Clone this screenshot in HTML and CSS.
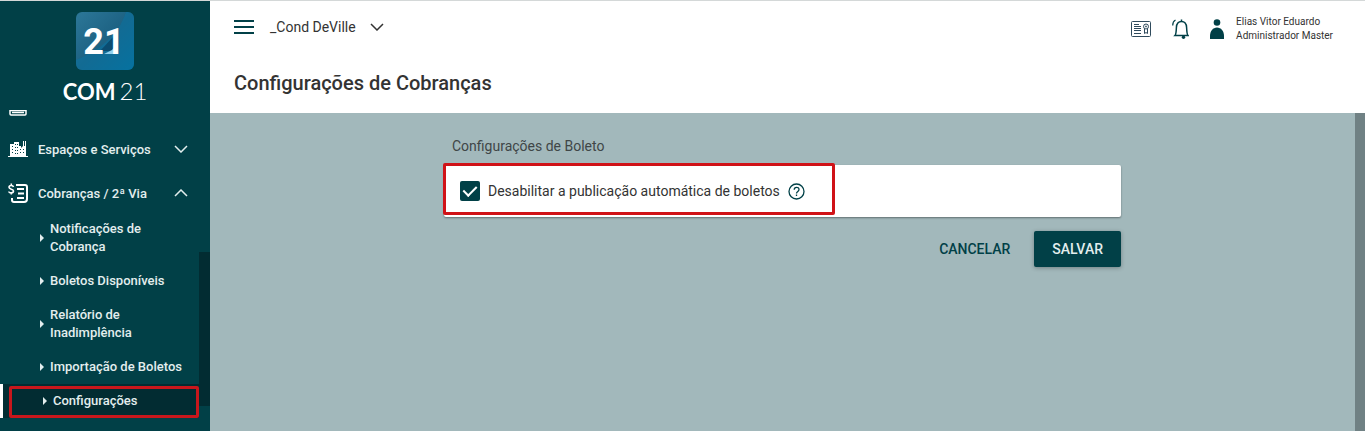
FILE: index.html
```html
<!DOCTYPE html>
<html lang="pt-BR">
<head>
  <meta charset="UTF-8">
  <meta name="viewport" content="width=device-width, initial-scale=1.0">
  <title>COM21 - Configurações de Cobranças</title>
  <link rel="stylesheet" href="styles.css">
</head>
<body>
  <aside class="sidebar">
    <div class="logo">
      <svg class="logo-mark" viewBox="0 0 58 58" role="img" aria-label="COM21">
        <defs>
          <linearGradient id="logo-bg" x1="0" y1="0" x2="1" y2="1">
            <stop offset="0" stop-color="#2c7798"/>
            <stop offset="0.5" stop-color="#1d6283"/>
            <stop offset="1" stop-color="#04709c"/>
          </linearGradient>
        </defs>
        <rect width="58" height="58" rx="6" fill="url(#logo-bg)"/>
        <path d="M50 0h2a6 6 0 0 1 6 6v46a6 6 0 0 1-6 6H6a6 6 0 0 1-6-6v-4C22 39 42 25 50 0z" fill="#0874a3" opacity="0.5"/>
        <path d="M24 39l14-15v15z" fill="#0b4c70"/>
        <path d="M28 42l8-4 5-6v10z" fill="#8fd0ee"/>
        <text class="logo-digits" x="28" y="42">21</text>
      </svg>
      <div class="logo-name"><b>COM</b><span>21</span></div>
    </div>

    <nav class="menu">
      <div class="menu-clipped">
        <svg width="18" height="22" viewBox="0 0 18 22" fill="none" stroke="#fff">
          <path d="M1 1h16v19q0 1-1 1H2q-1 0-1-1z" stroke-width="1.5"/>
          <path d="M3 18.500h12M1 16.500h16" stroke-width="1.5"/>
        </svg>
      </div>
      <button class="menu-item" type="button">
        <svg class="menu-icon" viewBox="0 0 20 20" fill="#fff">
          <path fill-rule="evenodd" d="M0 17h2V5h4V3h5v4h2V9l2-2V2h1v5h1V2h1v15h2v1H0zM4 7v1h1V7zm0 3v1h1v-1zm0 3v1h1v-1zM7 5v1h1V5zm2 0v1h1V5zM7 8v1h1V8zm2 0v1h1V8zm-2 3v1h1v-1zm2 0v1h1v-1zm-2 3v1h1v-1zm2 0v1h1v-1zm3-4v1h1v-1zm3 0v1h1v-1zm-3 3v1h1v-1zm3 0v1h1v-1z"/>
        </svg>
        <span class="menu-label">Espaços e Serviços</span>
        <svg class="chevron" viewBox="0 0 14 8"><path d="M1 1l6 6 6-6"/></svg>
      </button>
      <button class="menu-item" type="button" aria-expanded="true">
        <svg class="menu-icon" viewBox="0 0 20 20" fill="none" stroke="#fff" stroke-width="2">
          <path d="M8 2h9q2 0 2 2v12q0 3-3 3H6q-2 0-2-2v-2"/>
          <path d="M9 6h7M10 10.500h6M9 15h7"/>
          <path d="M5.500 4C5 2 1 2 1 4.300s4.500 1.400 4.500 3.700S1 10.500.800 8.500M3.300.500v2M3.300 9.500v2" stroke-width="1.600"/>
        </svg>
        <span class="menu-label">Cobranças / 2ª Via</span>
        <svg class="chevron" viewBox="0 0 14 8"><path d="M1 7l6-6 6 6"/></svg>
      </button>
      <ul class="submenu">
        <li><a href="#">Notificações de Cobrança</a></li>
        <li><a href="#">Boletos Disponíveis</a></li>
        <li><a href="#">Relatório de Inadimplência</a></li>
        <li><a href="#">Importação de Boletos</a></li>
        <li><a class="active" href="#">Configurações</a></li>
      </ul>
    </nav>
    <div class="sidebar-scroll"></div>
  </aside>

  <div class="page">
    <header class="header">
      <div class="topbar">
        <button class="icon-btn" type="button" aria-label="Menu">
          <svg width="20" height="14" viewBox="0 0 20 14" fill="#014047">
            <path d="M0 0h20v2H0zM0 6h20v2H0zM0 12h20v2H0z"/>
          </svg>
        </button>
        <button class="cond" type="button">
          _Cond DeVille
          <svg class="chevron" viewBox="0 0 14 8"><path d="M1 1l6 6 6-6"/></svg>
        </button>
        <div class="user-area">
          <button class="icon-btn" type="button" aria-label="Certificado">
            <svg width="20" height="16" viewBox="0 0 20 16" fill="none" stroke="#2f4a5c">
              <rect x="0.500" y="0.500" width="19" height="15" rx="1"/>
              <path d="M3 3.500h5M3 5.500h7M3 7.500h7M3 9.500h7M3 12.500h7"/>
              <circle cx="15" cy="5.500" r="2.500"/>
              <circle cx="15" cy="5.500" r="0.600"/>
              <path d="M13.500 8v4.500l1.500-1 1.500 1V8"/>
            </svg>
          </button>
          <button class="icon-btn" type="button" aria-label="Notificações">
            <svg width="17" height="20" viewBox="0 0 17 20" fill="none" stroke="#014047" stroke-width="1.500">
              <path d="M3 16.500h13c-1-1-1.200-3-1.400-8C14.400 4.500 12.500 2.500 9.500 2.500S4.600 4.500 4.400 8.500c-.2 5-.4 7-1.400 8zM9.500 2.500V.500"/>
              <path d="M.700 6.500C.700 4 1.500 2 3.500 1" stroke-width="1.200"/>
              <circle cx="11.500" cy="18.200" r="1.700" fill="#014047" stroke="none"/>
            </svg>
          </button>
          <button class="profile" type="button">
            <svg width="14" height="20" viewBox="0 0 14 20" fill="#014047">
              <circle cx="7" cy="3.500" r="3.300"/>
              <path d="M0 20v-3C0 12 3 8.500 7 8.500s7 3.500 7 8.500v3z"/>
            </svg>
            <span>Elias Vitor Eduardo<br>Administrador Master</span>
          </button>
        </div>
      </div>
      <h1>Configurações de Cobranças</h1>
    </header>

    <main class="content">
      <form class="settings">
        <h2>Configurações de Boleto</h2>
        <div class="card">
          <div class="option">
            <input type="checkbox" id="disable-auto" checked>
            <label for="disable-auto">Desabilitar a publicação automática de boletos</label>
            <button class="icon-btn" type="button" aria-label="Ajuda">
              <svg width="17" height="17" viewBox="0 0 17 17" fill="none" stroke="#014047" stroke-width="1.300">
                <circle cx="8.500" cy="8.500" r="7.500"/>
                <path d="M6.200 6.800C6.200 3.500 11 3.600 11 6.500c0 1.800-2.500 2-2.500 4M8.500 11.500V13"/>
              </svg>
            </button>
          </div>
        </div>
        <div class="actions">
          <button class="btn" type="button">CANCELAR</button>
          <button class="btn btn-primary" type="submit">SALVAR</button>
        </div>
      </form>
    </main>
  </div>
</body>
</html>
```
FILE: styles.css
```css
*,
*::before,
*::after {
  margin: 0;
  padding: 0;
  box-sizing: border-box;
}

body {
  display: flex;
  height: 100vh;
  overflow: hidden;
  border-top: 1px solid #d4d8d8;
  background-color: #a2b8bb;
  color: #333;
  font-family: Roboto, sans-serif;
}

button {
  border: none;
  background: none;
  color: inherit;
  font: inherit;
  cursor: pointer;
}

svg {
  display: block;
  flex: none;
}

.chevron {
  width: 14px;
  height: 8px;
  fill: none;
  stroke: currentColor;
  stroke-width: 1.5;
}

/* sidebar */
.sidebar {
  position: relative;
  display: flex;
  flex-direction: column;
  flex: none;
  width: 210px;
  overflow: hidden;
  background-color: #014047;
  color: #e3eeee;
}

.logo {
  display: flex;
  flex-direction: column;
  align-items: center;
  height: 109px;
  padding-top: 11px;
  flex: none;
}

.logo-mark {
  width: 58px;
  height: 58px;
}

.logo-digits {
  font-family: Roboto, sans-serif;
  font-size: 36px;
  font-weight: bold;
  text-anchor: middle;
  fill: #fff;
}

.logo-name {
  display: flex;
  align-items: baseline;
  gap: 4px;
  margin-top: 7px;
  font-family: Lato, sans-serif;
  font-size: 22px;
  line-height: 28px;
  color: #fff;
}

.logo-name span {
  font-size: 24px;
  font-weight: 300;
}

.menu-clipped {
  display: flex;
  align-items: flex-end;
  height: 6px;
  margin-bottom: 16px;
  padding-left: 9px;
  overflow: hidden;
}

.menu-item {
  display: flex;
  align-items: center;
  width: 100%;
  height: 34px;
  padding: 0 22px 0 8px;
  font-size: 13px;
  font-weight: 500;
  text-align: left;
}

.menu-item + .menu-item {
  margin-top: 10px;
}

.menu-icon {
  width: 20px;
  height: 20px;
  margin-right: 10px;
}

.menu-label {
  flex: 1;
}

.submenu {
  margin-top: 2px;
  margin-right: 11px;
  list-style: none;
}

.submenu a {
  display: flex;
  align-items: center;
  position: relative;
  padding: 8px 10px 8px 40px;
  color: inherit;
  font-size: 13px;
  font-weight: 500;
  line-height: 18px;
  text-decoration: none;
}

.submenu li:nth-child(-n+3) a {
  padding-right: 30px;
}

.submenu a::before {
  content: "";
  margin-right: 6px;
  border: 4px solid transparent;
  border-left-color: currentColor;
  border-right: none;
}

.submenu .active {
  border-left: 3px solid #fff;
  background-color: #022c32;
}

.submenu .active::after {
  content: "";
  position: absolute;
  inset: 2px 0 0 6px;
  border: 3px solid #c8171c;
  border-radius: 2px;
}

.sidebar-scroll {
  position: absolute;
  top: 251px;
  right: 0;
  width: 11px;
  height: 154px;
  background-color: #022c32;
}

/* header */
.page {
  display: flex;
  flex: 1;
  flex-direction: column;
  min-width: 0;
}

.header {
  padding: 13px 32px 0 24px;
  height: 112px;
  background-color: #fff;
}

.topbar {
  display: flex;
  align-items: center;
  height: 26px;
}

.cond {
  display: flex;
  align-items: center;
  gap: 14px;
  margin-left: 16px;
  font-size: 14px;
}

.user-area {
  display: flex;
  align-items: center;
  gap: 21px;
  margin-top: 4px;
  margin-left: auto;
}

.profile {
  display: flex;
  align-items: center;
  gap: 12px;
  font-size: 10px;
  line-height: 14px;
  text-align: left;
}

h1 {
  margin-top: 30px;
  font-size: 20px;
  font-weight: 500;
  line-height: 26px;
}

/* content */
.content {
  flex: 1;
  padding: 24px 16px;
  border-right: 10px solid #708184;
}

.settings {
  max-width: 677px;
  margin: 0 auto;
}

h2 {
  padding-left: 8px;
  color: #3f4647;
  font-size: 14px;
  font-weight: 400;
  line-height: 18px;
}

.card {
  position: relative;
  margin-top: 10px;
  border-radius: 2px;
  background-color: #fff;
  box-shadow: 0 1px 2px rgba(0, 0, 0, 0.4);
}

.option {
  display: flex;
  align-items: center;
  gap: 8px;
  height: 52px;
  padding-left: 16px;
  font-size: 14px;
}

/* highlight */
.option::after {
  content: "";
  position: absolute;
  top: -2px;
  left: -1px;
  width: 392px;
  height: 52px;
  border: 3px solid #d01217;
  border-radius: 2px;
  pointer-events: none;
}

.option input {
  appearance: none;
  position: relative;
  width: 20px;
  height: 20px;
  border-radius: 2px;
  background-color: #014047;
}

.option input:checked::after {
  content: "";
  position: absolute;
  top: 2px;
  left: 6px;
  width: 8px;
  height: 13px;
  border: solid #fff;
  border-width: 0 2px 2px 0;
  transform: rotate(45deg);
}

.actions {
  display: flex;
  justify-content: flex-end;
  gap: 6px;
  margin-top: 14px;
}

.btn {
  height: 36px;
  padding: 0 18px;
  border-radius: 2px;
  color: #014047;
  font-size: 14px;
  font-weight: 500;
}

.btn-primary {
  background-color: #014047;
  box-shadow: 0 1px 4px rgba(0, 0, 0, 0.3);
  color: #e3eeee;
}
```
